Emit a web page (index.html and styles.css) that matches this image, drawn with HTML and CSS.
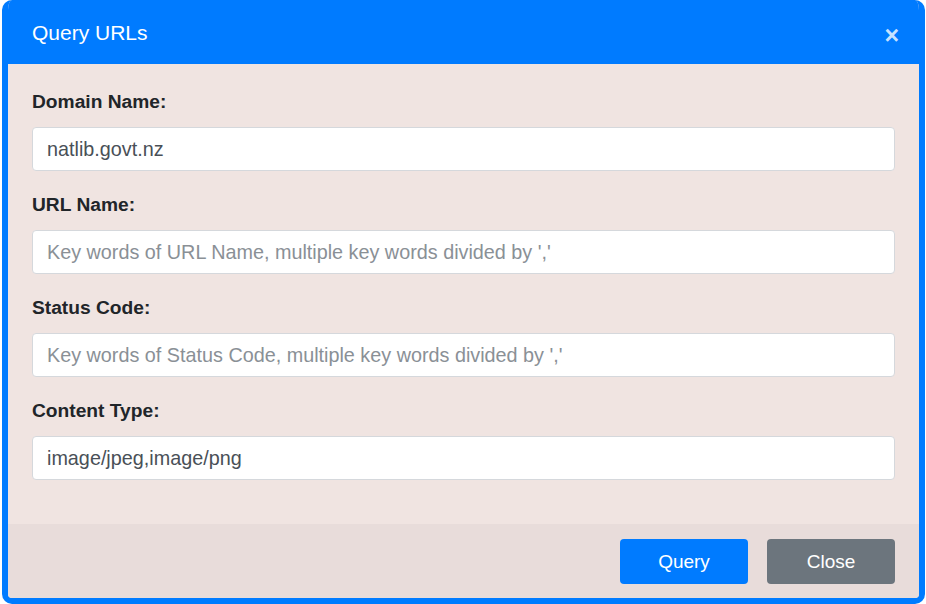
FILE: index.html
```html
<!DOCTYPE html>
<html lang="en">
<head>
<meta charset="utf-8">
<title>Query URLs</title>
<link rel="stylesheet" href="styles.css">
</head>
<body>
<div class="backdrop">
  <div class="modal">
    <div class="modal-header">
      <h5 class="modal-title">Query URLs</h5>
      <button class="close" type="button" aria-label="Close">&times;</button>
    </div>
    <div class="modal-body">
      <div class="form-group">
        <label class="form-label">Domain Name:</label>
        <input class="form-control" type="text" value="natlib.govt.nz">
      </div>
      <div class="form-group">
        <label class="form-label">URL Name:</label>
        <input class="form-control" type="text" placeholder="Key words of URL Name, multiple key words divided by ','">
      </div>
      <div class="form-group">
        <label class="form-label">Status Code:</label>
        <input class="form-control" type="text" placeholder="Key words of Status Code, multiple key words divided by ','">
      </div>
      <div class="form-group">
        <label class="form-label">Content Type:</label>
        <input class="form-control" type="text" value="image/jpeg,image/png">
      </div>
    </div>
    <div class="modal-footer">
      <button class="btn btn-primary" type="button">Query</button>
      <button class="btn btn-secondary" type="button">Close</button>
    </div>
  </div>
</div>
</body>
</html>
```

FILE: styles.css
```css
* { box-sizing: border-box; }
html, body {
  margin: 0;
  padding: 0;
  background: #ffffff;
  font-family: "Liberation Sans", Arial, sans-serif;
}
.backdrop {
  width: 926px;
  height: 604px;
  padding-left: 2px;
  overflow: hidden;
}
.modal {
  width: 923px;
  height: 604px;
  border: 6px solid #007bff;
  border-top-width: 0;
  border-radius: 10px;
  background: #f0e4e1;
  display: flex;
  flex-direction: column;
  overflow: hidden;
}
.modal-header {
  height: 64px;
  background: #007bff;
  display: flex;
  align-items: center;
  justify-content: space-between;
  margin: 0 -6px;
  padding: 1px 26px 0 30px;
}
.modal-title {
  margin: 0;
  font-size: 21px;
  font-weight: 400;
  color: #ffffff;
  line-height: 1.5;
}
.close {
  background: none;
  border: 0;
  padding: 0;
  margin-top: 6px;
  color: rgba(255, 255, 255, 0.8);
  font-family: "Liberation Sans", Arial, sans-serif;
  font-size: 25px;
  font-weight: 700;
  line-height: 1;
}
.modal-body {
  flex: 1;
  padding: 24px 24px 4px;
}
.form-group {
  margin-bottom: 20px;
}
.form-label {
  display: block;
  font-size: 19.2px;
  font-weight: 700;
  line-height: 27px;
  color: #212529;
  margin-bottom: 12px;
}
.form-control {
  display: block;
  width: 100%;
  height: 44px;
  padding: 0 14px;
  font-family: "Liberation Sans", Arial, sans-serif;
  font-size: 19.8px;
  color: #495057;
  background: #ffffff;
  border: 1px solid #d5d8dc;
  border-radius: 4px;
  outline: none;
}
.form-control::placeholder {
  color: #8a9096;
  opacity: 1;
}
.modal-footer {
  height: 74px;
  background: #e8dcda;
  display: flex;
  justify-content: flex-end;
  align-items: center;
  gap: 19px;
  padding: 1px 24px 0;
}
.btn {
  width: 128px;
  height: 45px;
  border: 0;
  border-radius: 4px;
  font-family: "Liberation Sans", Arial, sans-serif;
  font-size: 19px;
  color: #ffffff;
}
.btn-primary { background: #007bff; }
.btn-secondary { background: #6c757d; }
```
